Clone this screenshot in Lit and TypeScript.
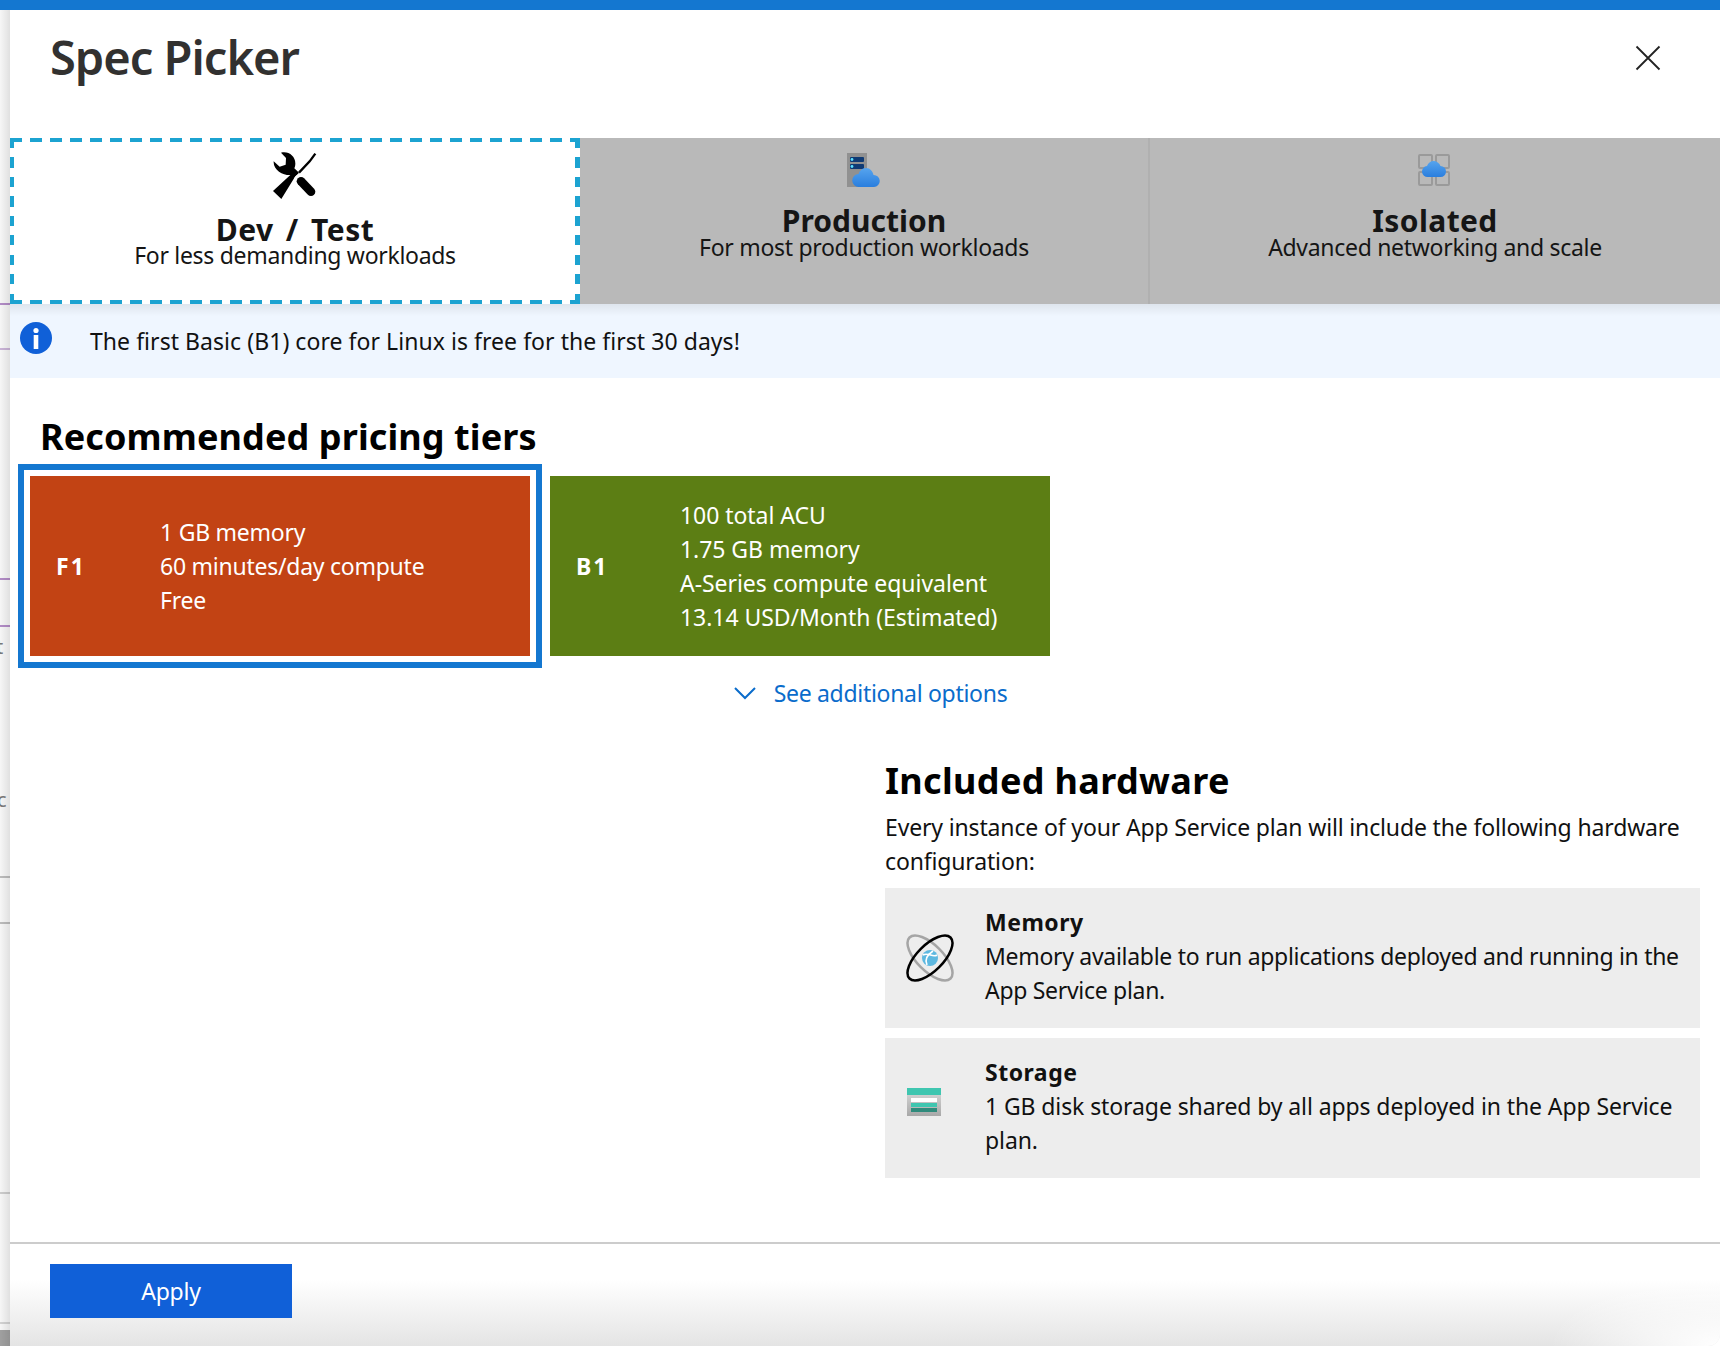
import { LitElement, html, css } from "lit";
import { customElement } from "lit/decorators.js";

@customElement("app-root")
export class AppRoot extends LitElement {
  static styles = css`
    :host { display: block; width: 1720px; height: 1346px; overflow: hidden; background: #111;
      font-family: "Noto Sans", "Liberation Sans", sans-serif; font-size: 23px; line-height: 34px; letter-spacing: -.2px; color: #111; }
    * { box-sizing: border-box; }
    .topbar { height: 10px; background: #1477d0; }
    .main { display: flex; height: 1336px; }
    .strip { position: relative; width: 10px; flex: none; overflow: hidden; background-color: #f6f6f6;
      background-image:
        linear-gradient(90deg, rgba(0,0,0,0) 0, rgba(0,0,0,.09) 100%),
        linear-gradient(#a0a0a0, #a0a0a0),
        linear-gradient(#c9b3d6, #c9b3d6), linear-gradient(#b28cc6, #b28cc6), linear-gradient(#b28cc6, #b28cc6), linear-gradient(#b28cc6, #b28cc6),
        linear-gradient(#bbb, #bbb), linear-gradient(#bbb, #bbb), linear-gradient(#ccc, #ccc), linear-gradient(#d2d2d2, #d2d2d2);
      background-repeat: no-repeat;
      background-size: 100% 100%, 100% 16px, 100% 2px, 100% 2px, 100% 2px, 100% 2px, 100% 2px, 100% 2px, 100% 2px, 100% 2px;
      background-position: 0 0, 0 1320px, 0 338px, 0 568px, 0 615px, 0 293px, 0 866px, 0 912px, 0 1182px, 0 1312px; }
    .strip span { position: absolute; color: #777; font-size: 20px; line-height: 20px; }
    .strip .g1 { left: -4px; top: 627px; }
    .strip .g2 { left: -3px; top: 780px; }
    .panel { flex: 1; min-width: 0; display: flex; flex-direction: column; background: #fff; }
    header { height: 128px; flex: none; display: flex; justify-content: space-between; padding: 17px 59px 0 40px; }
    h1 { margin: 0; font-size: 47px; line-height: 60px; font-weight: 600; color: #323130; letter-spacing: -1px; }
    .close { width: 26px; height: 26px; margin-top: 18px; }
    .tabs { display: grid; grid-template-columns: 570px 568px 1fr; height: 166px; flex: none; }
    .tab { background: #b9b9b9; display: flex; flex-direction: column; align-items: center; padding-top: 15px; color: #151515; }
    .tab.iso { border-left: 2px solid #b0b0b0; padding-top: 16px; }
    .tab.iso svg { margin-right: 2px; }
    .tab.on { background-color: #fff; padding-top: 14px;
      background-image:
        repeating-linear-gradient(90deg, #1ca3d1 0 12px, transparent 12px 20px),
        repeating-linear-gradient(90deg, #1ca3d1 0 12px, transparent 12px 20px),
        repeating-linear-gradient(0deg, #1ca3d1 0 10px, transparent 10px 19.5px),
        repeating-linear-gradient(0deg, #1ca3d1 0 10px, transparent 10px 19.5px);
      background-size: 100% 4px, 100% 4px, 4px 100%, 5px 100%;
      background-position: 0 0, 0 100%, 0 0, 100% 0;
      background-repeat: no-repeat; }
    .tab svg { display: block; }
    .tab.on svg { margin-right: 2px; }
    .tab b { display: block; font-size: 30px; line-height: 30px; margin-top: 19px; font-weight: 700; letter-spacing: 0; }
    .tab.iso b { margin-top: 20px; letter-spacing: .4px; }
    .tab.on b { margin-top: 16px; word-spacing: 4px; letter-spacing: .5px; }
    .tab span { display: block; line-height: 24px; letter-spacing: -.3px; margin-top: -1px; }
    .tab.on span { margin-top: -2px; }
    .info { height: 74px; flex: none; display: flex; align-items: center; padding: 0 0 0 10px; gap: 38px; letter-spacing: .05px;
      background: linear-gradient(rgba(0,0,0,.07), rgba(0,0,0,0) 12px), #eff6ff; }
    .info svg { margin-top: -6px; }
    .body { flex: 1; display: flex; flex-direction: column; min-height: 0; }
    h2 { margin: 0; font-size: 36px; line-height: 44px; font-weight: 700; color: #000; letter-spacing: .1px; }
    .rec { padding: 37px 0 0 30px; }
    .tiers { display: flex; align-items: center; gap: 8px; margin: 5px 0 0 8px; }
    .sel { border: 6px solid #1477d0; padding: 6px; background: #fff; }
    .tile { width: 500px; height: 180px; color: #fff; display: flex; align-items: center; padding-left: 26px; letter-spacing: -.25px; }
    .tile b { width: 104px; flex: none; letter-spacing: 2px; }
    .f1 { background: #c24314; }
    .b1 { background: #5c7e14; letter-spacing: -.05px; }
    .more { display: flex; align-items: center; justify-content: center; gap: 17px; padding-left: 10px; margin-top: 8px; height: 34px; color: #0a6ccb; letter-spacing: -.3px; }
    .hw { margin: 49px 0 0 875px; width: 815px; }
    .hw h2 { margin-bottom: 7px; letter-spacing: .35px; }
    .hw p { margin: 0 0 10px; letter-spacing: -.15px; }
    .card { display: flex; height: 140px; background: #ededed; padding: 17px 4px 0 0; margin-bottom: 10px; letter-spacing: -.1px; }
    .card.mem { letter-spacing: -.3px; }
    .card .ic { width: 100px; flex: none; display: flex; align-items: center; height: 106px; padding-left: 20px; }
    .card .ic.st { padding-left: 22px; padding-bottom: 12px; }
    .card b { display: block; letter-spacing: .5px; }
    footer { margin-top: auto; height: 104px; border-top: 2px solid #ccc; padding: 20px 0 0 40px; border-bottom-right-radius: 12px;
      background:
        radial-gradient(170px 70px at 100% 100%, #fff 0, rgba(255,255,255,0) 100%),
        linear-gradient(#fff 20px, #fff 35%, #e4e4e4 100%); }
    button { display: block; width: 242px; height: 54px; border: 0; padding: 0; background: #1060d8; color: #fff; font: inherit; letter-spacing: inherit; }
  `;

  render() {
    return html`
      <div class="topbar"></div>
      <div class="main">
        <div class="strip"><span class="g1">t</span><span class="g2">c</span></div>
        <div class="panel">
          <header>
            <h1>Spec Picker</h1>
            <svg class="close" viewBox="0 0 26 26"><path d="M1.500 1.500l23 23M24.500 1.500l-23 23" stroke="#222" stroke-width="1.800" fill="none"/></svg>
          </header>
          <div class="tabs">
            <div class="tab on">
              <svg width="46" height="47" viewBox="0 0 138 141">
                <path d="M8 28L26 44L44 38L45 18L30 2C52-4 74 12 73 36C73 41 72 45 70 49L84 62L72 74L31 141L6 117L58 69C36 70 6 54 8 28Z" fill="#000"/>
                <path d="M86 84L122 122" stroke="#fff" stroke-width="34" stroke-linecap="round"/>
                <path d="M90 88L120 119" stroke="#000" stroke-width="26" stroke-linecap="round"/>
                <path d="M133 5L116 28L84 62" stroke="#000" stroke-width="7" fill="none"/>
              </svg>
              <b>Dev / Test</b>
              <span>For less demanding workloads</span>
            </div>
            <div class="tab">
              <svg width="34" height="34" viewBox="0 0 34 34">
                <defs><linearGradient id="cg" x1="0" y1="0" x2="0" y2="1"><stop offset="0" stop-color="#56a4ee"/><stop offset="1" stop-color="#2a7ede"/></linearGradient></defs>
                <rect width="20" height="34" fill="#919191"/>
                <rect x="3" y="4" width="14" height="5" rx="1" fill="#0f3a74"/><rect x="3" y="11" width="14" height="5" rx="1" fill="#0f3a74"/>
                <circle cx="5" cy="6.500" r="1.400" fill="#5ce0ff"/><circle cx="5" cy="13.500" r="1.400" fill="#5ce0ff"/>
                <path d="M12 34a6.500 6.500 0 0 1-.5-13c1-3 3.500-6 7.500-6s7 3.500 7.500 7a6 6 0 0 1 .500 12z" fill="url(#cg)"/>
              </svg>
              <b>Production</b>
              <span>For most production workloads</span>
            </div>
            <div class="tab iso">
              <svg width="32" height="32" viewBox="0 0 32 32">
                <g fill="none" stroke="#9a9a9a" stroke-width="2"><rect x="1" y="1" width="13" height="13" rx="1"/><rect x="18" y="1" width="13" height="13" rx="1"/><rect x="1" y="18" width="13" height="13" rx="1"/><rect x="18" y="18" width="13" height="13" rx="1"/></g>
                <path d="M10 23a5.500 5.500 0 0 1-1-11c1-3 3.500-5 6.500-5s6 2 7 5a5.500 5.500 0 0 1 0 11z" fill="url(#cg)"/>
              </svg>
              <b>Isolated</b>
              <span>Advanced networking and scale</span>
            </div>
          </div>
          <div class="info">
            <svg width="32" height="32" viewBox="0 0 32 32"><circle cx="16" cy="16" r="16" fill="#1060d8"/><circle cx="16" cy="8.500" r="2.600" fill="#fff"/><rect x="13.700" y="13" width="4.600" height="14" fill="#fff"/></svg>
            <span>The first Basic (B1) core for Linux is free for the first 30 days!</span>
          </div>
          <div class="body">
            <div class="rec"><h2>Recommended pricing tiers</h2></div>
            <div class="tiers">
              <div class="sel"><div class="tile f1"><b>F1</b><div>1 GB memory<br>60 minutes/day compute<br>Free</div></div></div>
              <div class="tile b1"><b>B1</b><div>100 total ACU<br>1.75 GB memory<br>A-Series compute equivalent<br>13.14 USD/Month (Estimated)</div></div>
            </div>
            <div class="more">
              <svg width="24" height="14" viewBox="0 0 24 14"><path d="M2 2l10 10L22 2" stroke="#0a6ccb" stroke-width="2" fill="none"/></svg>
              <span>See additional options</span>
            </div>
            <div class="hw">
              <h2>Included hardware</h2>
              <p>Every instance of your App Service plan will include the following hardware configuration:</p>
              <div class="card mem">
                <div class="ic">
                  <svg width="50" height="50" viewBox="0 0 50 50">
                    <ellipse cx="25" cy="25" rx="29" ry="13" transform="rotate(45 25 25)" fill="none" stroke="#a5a5a5" stroke-width="2.500"/>
                    <circle cx="25" cy="25" r="8" fill="#5db8e0"/>
                    <path d="M18 22c5-3 10 3 14 0M22 32c-3-6 0-10 6-14" stroke="#fff" stroke-width="1.600" fill="none"/>
                    <ellipse cx="25" cy="25" rx="29" ry="13" transform="rotate(-45 25 25)" fill="none" stroke="#000" stroke-width="2.500"/>
                  </svg>
                </div>
                <div><b>Memory</b>Memory available to run applications deployed and running in the App Service plan.</div>
              </div>
              <div class="card">
                <div class="ic st">
                  <svg width="34" height="28" viewBox="0 0 34 28">
                    <defs><linearGradient id="sg" x1="0" y1="0" x2="0" y2="1"><stop offset="0" stop-color="#dcdcdc"/><stop offset="1" stop-color="#a8a8a8"/></linearGradient></defs>
                    <rect width="34" height="28" fill="url(#sg)"/>
                    <rect width="34" height="7" fill="#3fc6b0"/>
                    <rect x="4" y="10" width="26" height="4" fill="#fff"/>
                    <rect x="4" y="15" width="26" height="4" fill="#3fc6b0"/>
                    <rect x="4" y="20" width="26" height="4" fill="#2f8b7c"/>
                  </svg>
                </div>
                <div><b>Storage</b>1 GB disk storage shared by all apps deployed in the App Service plan.</div>
              </div>
            </div>
            <footer><button>Apply</button></footer>
          </div>
        </div>
      </div>
    `;
  }
}
